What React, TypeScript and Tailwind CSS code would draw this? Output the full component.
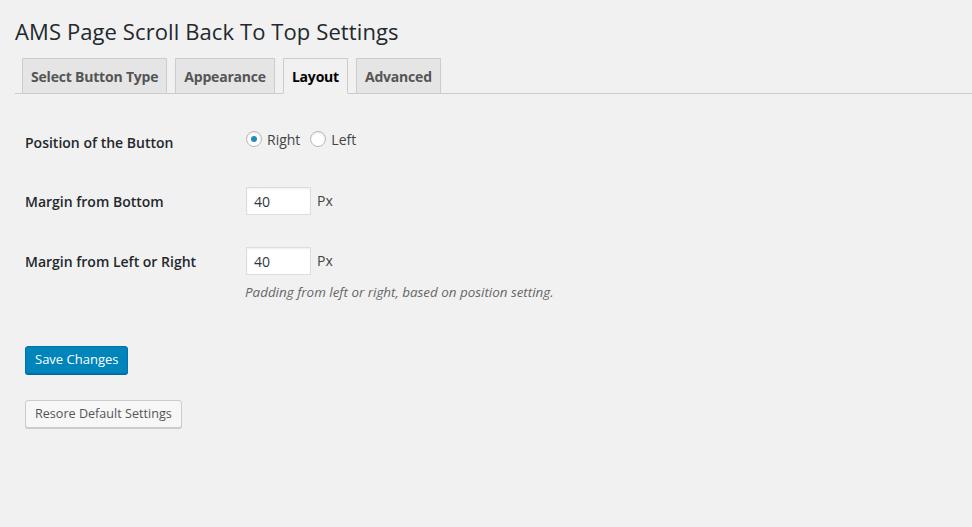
import React from 'react';

const tabs = ['Select Button Type', 'Appearance', 'Layout', 'Advanced'];

function Tab({ label, active }: { label: string; active?: boolean }) {
  return (
    <div
      className={
        'h-[36px] px-[8px] flex items-center border border-[#cccccc] text-[14px] font-bold tracking-[-0.2px] ' +
        (active ? 'bg-[#f1f1f1] border-b-[#f1f1f1] text-black' : 'bg-[#e5e5e5] text-[#555555]')
      }
    >
      {label}
    </div>
  );
}

function Radio({ checked, label }: { checked?: boolean; label: string }) {
  return (
    <label className="flex items-center gap-[5px] text-[14px] text-[#444]">
      <span className="w-[16px] h-[16px] rounded-full bg-white border border-[#b4b9be] shadow-[inset_0_1px_2px_rgba(0,0,0,0.1)] flex items-center justify-center">
        {checked && <span className="w-[6px] h-[6px] rounded-full bg-[#1e8cbe]" />}
      </span>
      {label}
    </label>
  );
}

function NumberField({ value }: { value: string }) {
  return (
    <div className="flex items-center gap-[6px]">
      <div className="w-[65px] h-[28px] bg-white border border-[#dddddd] shadow-[inset_0_1px_2px_rgba(0,0,0,0.07)] px-[7px] flex items-center text-[14px] text-[#32373c]">
        {value}
      </div>
      <span className="text-[14px] text-[#444] -mt-[2px]">Px</span>
    </div>
  );
}

export default function App() {
  return (
    <div className="min-h-[527px] bg-[#f1f1f1] text-[#23282d] font-['Open_Sans','Noto_Sans',sans-serif]">
      <div className="pl-[15px] pt-[17px]">
        <h1 className="text-[22px] leading-[29px] font-normal text-[#23282d] tracking-[0.1px]">
          AMS Page Scroll Back To Top Settings
        </h1>
        {/* Tabs */}
        <div className="mt-[12px] flex items-end gap-[8px] pl-[7px] border-b border-[#cccccc] h-[36px]">
          {tabs.map((t) => (
            <div key={t} className="-mb-px">
              <Tab label={t} active={t === 'Layout'} />
            </div>
          ))}
        </div>
      </div>

      <div className="pl-[25px] pt-[29px]">
        {/* Position */}
        <div className="flex items-center h-[36px]">
          <div className="w-[221px] text-[14px] font-semibold text-[#23282d] pt-[2px]">Position of the Button</div>
          <div className="flex items-center gap-[10px] -mt-[4px]">
            <Radio checked label="Right" />
            <Radio label="Left" />
          </div>
        </div>

        <div className="flex items-center h-[36px] mt-[24px]">
          <div className="w-[221px] text-[14px] font-semibold text-[#23282d]">Margin from Bottom</div>
          <NumberField value="40" />
        </div>

        <div className="flex items-center h-[36px] mt-[24px]">
          <div className="w-[221px] text-[14px] font-semibold text-[#23282d]">Margin from Left or Right</div>
          <NumberField value="40" />
        </div>
        <p className="ml-[220px] mt-[3px] text-[13.4px] italic text-[#666666]">
          Padding from left or right, based on position setting.
        </p>

        <button className="mt-[44px] h-[28px] px-[9px] rounded-[3px] bg-[#0085ba] border border-[#0073aa] shadow-[0_1px_0_#006799] text-white text-[13px] block">
          Save Changes
        </button>

        <button className="mt-[26px] h-[28px] px-[9px] rounded-[3px] bg-[#f7f7f7] border border-[#cccccc] shadow-[0_1px_0_#cccccc] text-[#555555] text-[12.6px] block">
          Resore Default Settings
        </button>
      </div>
    </div>
  );
}
